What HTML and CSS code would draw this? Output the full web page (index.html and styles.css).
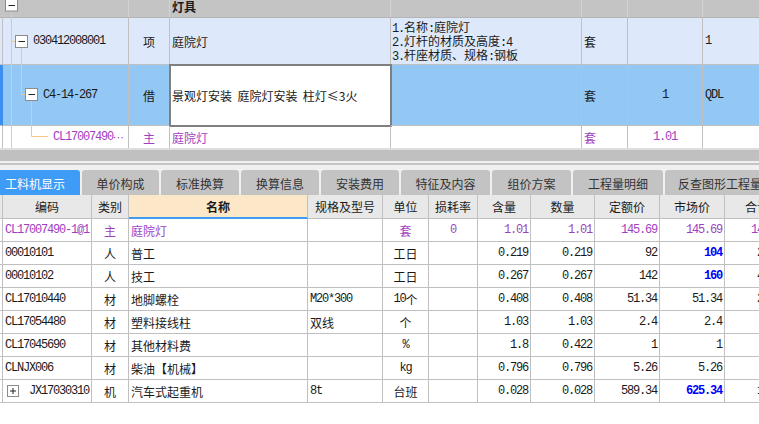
FILE: index.html
```html
<!DOCTYPE html>
<html lang="zh-CN">
<head>
<meta charset="utf-8">
<title>工料机显示</title>
<link rel="stylesheet" href="styles.css">
</head>
<body>
<div class="app">
  <div class="top">
    <div class="top-inner">
      <div class="trow r0">
        <div class="c"></div><div class="c"></div><div class="c"></div>
        <div class="c bold">灯具</div>
        <div class="c"></div><div class="c"></div><div class="c"></div><div class="c"></div>
      </div>
      <div class="trow r1">
        <div class="c"></div>
        <div class="c code1 m">030412008001</div>
        <div class="c center">项</div>
        <div class="c">庭院灯</div>
        <div class="c desc">
          <div class="line"><span class="m">1.</span>名称<span class="m">:</span>庭院灯</div>
          <div class="line"><span class="m">2.</span>灯杆的材质及高度<span class="m">:4</span></div>
          <div class="line"><span class="m">3.</span>杆座材质、规格<span class="m">:</span>钢板</div>
        </div>
        <div class="c">套</div>
        <div class="c center m"></div>
        <div class="c m">1</div>
      </div>
      <div class="trow r2">
        <div class="c selbar"></div>
        <div class="c code2 m">C4-14-267</div>
        <div class="c center">借</div>
        <div class="c edit">景观灯安装&nbsp;&nbsp;庭院灯安装&nbsp;&nbsp;柱灯≤3火</div>
        <div class="c"></div>
        <div class="c">套</div>
        <div class="c center m">1</div>
        <div class="c m">QDL</div>
      </div>
      <div class="trow r3 purple">
        <div class="c"></div>
        <div class="c code3"><span class="m">CL17007490</span><span class="dots">⋯</span></div>
        <div class="c center">主</div>
        <div class="c">庭院灯</div>
        <div class="c"></div>
        <div class="c">套</div>
        <div class="c center m">1.01</div>
        <div class="c"></div>
      </div>
    </div>
    <svg class="tree" width="60" height="148" viewBox="0 0 60 148">
      <g stroke="#f8c684" stroke-width="1" fill="none">
        <line x1="11.5" y1="0" x2="11.5" y2="148"/>
        <line x1="11.5" y1="41.5" x2="15.5" y2="41.5"/>
        <line x1="21.5" y1="47.5" x2="21.5" y2="94.5"/>
        <line x1="21.5" y1="94.5" x2="25.5" y2="94.5"/>
        <line x1="31.5" y1="100.5" x2="31.5" y2="136.5"/>
        <line x1="31.5" y1="136.5" x2="48" y2="136.5"/>
      </g>
      <g fill="#fff" stroke="#8c8c8c" stroke-width="1">
        <rect x="5.5" y="-0.5" width="12" height="11.5"/>
        <rect x="15.5" y="35.5" width="12" height="12"/>
        <rect x="25.5" y="88.5" width="12" height="12"/>
      </g>
      <g stroke="#222" stroke-width="1">
        <line x1="8.5" y1="5.5" x2="15" y2="5.5"/>
        <line x1="18.5" y1="41.5" x2="25" y2="41.5"/>
        <line x1="28.5" y1="94.5" x2="35" y2="94.5"/>
      </g>
    </svg>
  </div>

  <div class="splitter">
    <div class="sp-a"></div>
    <div class="sp-b"></div>
    <div class="sp-c"></div>
    <div class="sp-d"></div>
    <div class="sp-e"></div>
  </div>

  <div class="tabs">
    <div class="tab active t1">工料机显示</div>
    <div class="tab t2">单价构成</div>
    <div class="tab t3">标准换算</div>
    <div class="tab t3">换算信息</div>
    <div class="tab t3">安装费用</div>
    <div class="tab t6">特征及内容</div>
    <div class="tab t7">组价方案</div>
    <div class="tab t8">工程量明细</div>
    <div class="tab t9">反查图形工程量</div>
  </div>

  <div class="grid">
    <div class="brow hdr">
      <div class="c"></div>
      <div class="c center">编码</div>
      <div class="c center">类别</div>
      <div class="c center name-h">名称</div>
      <div class="c center">规格及型号</div>
      <div class="c center">单位</div>
      <div class="c center">损耗率</div>
      <div class="c center">含量</div>
      <div class="c center">数量</div>
      <div class="c center">定额价</div>
      <div class="c center">市场价</div>
      <div class="c center">合计</div>
    </div>
    <div class="brow purple">
      <div class="c"></div>
      <div class="c m">CL17007490-1@1</div>
      <div class="c center">主</div>
      <div class="c">庭院灯</div>
      <div class="c"></div>
      <div class="c center">套</div>
      <div class="c center m">0</div>
      <div class="c right m">1.01</div>
      <div class="c right m">1.01</div>
      <div class="c right m">145.69</div>
      <div class="c right m">145.69</div>
      <div class="c right m">147.15</div>
    </div>
    <div class="brow">
      <div class="c"></div>
      <div class="c m">00010101</div>
      <div class="c center">人</div>
      <div class="c">普工</div>
      <div class="c"></div>
      <div class="c center">工日</div>
      <div class="c"></div>
      <div class="c right m">0.219</div>
      <div class="c right m">0.219</div>
      <div class="c right m">92</div>
      <div class="c right m blue">104</div>
      <div class="c right m">22.78</div>
    </div>
    <div class="brow">
      <div class="c"></div>
      <div class="c m">00010102</div>
      <div class="c center">人</div>
      <div class="c">技工</div>
      <div class="c"></div>
      <div class="c center">工日</div>
      <div class="c"></div>
      <div class="c right m">0.267</div>
      <div class="c right m">0.267</div>
      <div class="c right m">142</div>
      <div class="c right m blue">160</div>
      <div class="c right m">42.72</div>
    </div>
    <div class="brow">
      <div class="c"></div>
      <div class="c m">CL17010440</div>
      <div class="c center">材</div>
      <div class="c">地脚螺栓</div>
      <div class="c m">M20*300</div>
      <div class="c center"><span class="m">10</span>个</div>
      <div class="c"></div>
      <div class="c right m">0.408</div>
      <div class="c right m">0.408</div>
      <div class="c right m">51.34</div>
      <div class="c right m">51.34</div>
      <div class="c right m">20.95</div>
    </div>
    <div class="brow">
      <div class="c"></div>
      <div class="c m">CL17054480</div>
      <div class="c center">材</div>
      <div class="c">塑料接线柱</div>
      <div class="c">双线</div>
      <div class="c center">个</div>
      <div class="c"></div>
      <div class="c right m">1.03</div>
      <div class="c right m">1.03</div>
      <div class="c right m">2.4</div>
      <div class="c right m">2.4</div>
      <div class="c right m">2.47</div>
    </div>
    <div class="brow">
      <div class="c"></div>
      <div class="c m">CL17045690</div>
      <div class="c center">材</div>
      <div class="c">其他材料费</div>
      <div class="c"></div>
      <div class="c center m">%</div>
      <div class="c"></div>
      <div class="c right m">1.8</div>
      <div class="c right m">0.422</div>
      <div class="c right m">1</div>
      <div class="c right m">1</div>
      <div class="c right m">0.42</div>
    </div>
    <div class="brow">
      <div class="c"></div>
      <div class="c m">CLNJX006</div>
      <div class="c center">材</div>
      <div class="c">柴油【机械】</div>
      <div class="c"></div>
      <div class="c center m">kg</div>
      <div class="c"></div>
      <div class="c right m">0.796</div>
      <div class="c right m">0.796</div>
      <div class="c right m">5.26</div>
      <div class="c right m">5.26</div>
      <div class="c right m">4.19</div>
    </div>
    <div class="brow">
      <div class="c"></div>
      <div class="c">
        <svg class="plus" width="12" height="12" viewBox="0 0 12 12">
          <rect x="0.5" y="0.5" width="11" height="11" fill="#fff" stroke="#8c8c8c"/>
          <line x1="3" y1="6" x2="9" y2="6" stroke="#222"/>
          <line x1="6" y1="3" x2="6" y2="9" stroke="#222"/>
        </svg><span class="m">JX17030310</span>
      </div>
      <div class="c center">机</div>
      <div class="c">汽车式起重机</div>
      <div class="c m">8t</div>
      <div class="c center">台班</div>
      <div class="c"></div>
      <div class="c right m">0.028</div>
      <div class="c right m">0.028</div>
      <div class="c right m">589.34</div>
      <div class="c right m blue">625.34</div>
      <div class="c right m">17.51</div>
    </div>
  </div>
</div>
</body>
</html>
```

FILE: styles.css
```css
html, body {
  margin: 0;
  padding: 0;
  background: #ffffff;
}
body {
  width: 759px;
  height: 424px;
  overflow: hidden;
  font-family: "Noto Sans CJK SC", "Noto Sans", sans-serif;
  font-size: 12px;
  color: #1a1a1a;
}
.app {
  width: 759px;
  overflow: hidden;
}
.m {
  font-family: "Liberation Mono", "Noto Sans CJK SC", monospace;
  letter-spacing: -1.2px;
}
.bold { font-weight: bold; }
.center { justify-content: center; }
.right { justify-content: flex-end; }
.purple { color: #a13fc1; }
.blue { color: #0000ff; font-weight: bold; }

/* ---------- top grid ---------- */
.top {
  position: relative;
  height: 148px;
  overflow: hidden;
}
.top-inner {
  margin-top: -5px;
  width: 790px;
}
.trow {
  display: grid;
  grid-template-columns: 3px 126px 41px 221px 191px 46px 75px 87px;
}
.trow .c, .brow .c {
  box-sizing: border-box;
  border-right: 1px solid #c0c0c0;
  border-bottom: 1px solid #c0c0c0;
  display: flex;
  align-items: center;
  white-space: nowrap;
  overflow: hidden;
  padding: 0 2px;
}
.trow .c:first-child, .brow .c:first-child { padding: 0; }
.r0 { height: 23px; background: #c4c4c4; }
.r0 .c { border-right-color: #d2d2d2; border-bottom-color: #b4b4b4; }
.r0 .c:first-child { border-right-color: #c4c4c4; }
.r0 .bold { padding-left: 2px; }
.r1 { height: 47px; background: #dde9fb; }
.r2 { height: 61px; background: #93c8f5; }
.r3 { height: 23px; background: #ffffff; }
.code1 { padding-left: 30px !important; }
.code2 { padding-left: 40px !important; }
.code3 { padding-left: 50px !important; }
.dots { font-family: "DejaVu Sans", sans-serif; font-size: 11px; }
.desc {
  flex-direction: column;
  align-items: flex-start !important;
  justify-content: center;
  padding-left: 1px !important;
}
.desc .line {
  height: 14px;
  line-height: 14px;
  overflow: visible;
}
.desc .line .m { line-height: 14px; }
.selbar { background: #3d8ef0; border-right-color: #3d8ef0 !important; }
.edit {
  background: #ffffff;
  outline: 2px solid #7f7f7f;
  outline-offset: -1px;
}
.tree {
  position: absolute;
  left: 0;
  top: 0;
}

/* ---------- splitter ---------- */
.sp-a { height: 2px; background: #dddddd; }
.sp-b { height: 11px; background: #c0c0c0; }
.sp-c { height: 2px; background: #f0f0f0; }
.sp-d { height: 2px; background: #c4c4c4; }
.sp-e { height: 5px; background: #f0f0f0; }

/* ---------- tabs ---------- */
.tabs {
  display: flex;
  gap: 2px;
  height: 25px;
  background: #f0f0f0;
  margin-left: -10px;
}
.tab {
  flex-shrink: 0;
  box-sizing: border-box;
  background: #c3c3c3;
  color: #333333;
  border-radius: 3px 3px 0 0;
  display: flex;
  align-items: center;
  justify-content: center;
  padding-top: 2px;
  white-space: nowrap;
  overflow: hidden;
}
.tab.active { background: #3f9cf6; color: #ffffff; }
.t1 { width: 90px; }
.t2 { width: 77px; }
.t3 { width: 78px; }
.t6 { width: 89px; }
.t7 { width: 79px; }
.t8 { width: 90px; }
.t9 { width: 130px; justify-content: flex-start; padding-left: 13px; }

/* ---------- bottom grid ---------- */
.grid { width: 790px; }
.brow {
  display: grid;
  grid-template-columns: 3px 89px 37px 179px 75px 46px 49px 53px 64px 65px 65px 65px;
  height: 23px;
}
.brow.hdr {
  height: 24px;
  background: #e8e8e8;
}
.hdr .name-h {
  background: #fde7c9;
  font-weight: bold;
  border-bottom: 2px solid #3d9cf5;
}
.plus { margin: 0 10px 0 2px; flex-shrink: 0; }
```
